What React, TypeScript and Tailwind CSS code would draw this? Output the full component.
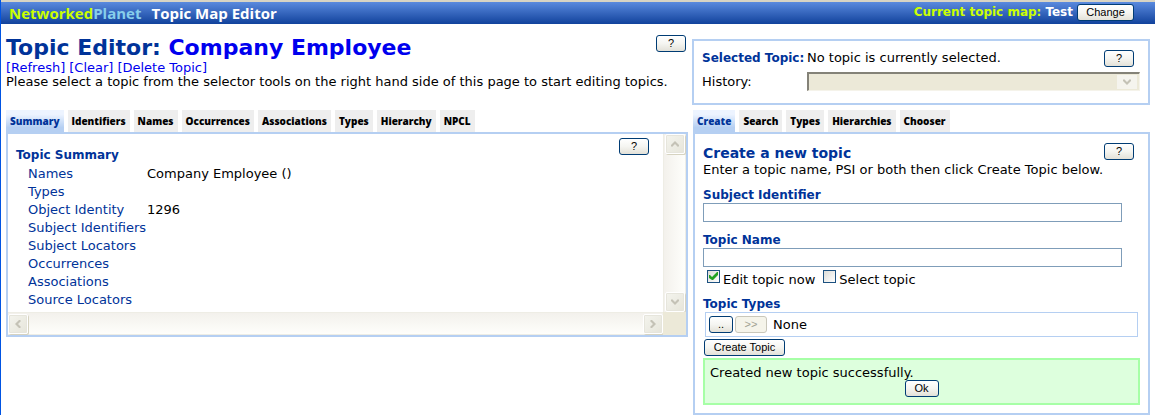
import { useState, type ReactNode } from "react";
import { clsx } from "clsx";

const summaryRows: [string, string][] = [
  ["Names", "Company Employee ()"],
  ["Types", ""],
  ["Object Identity", "1296"],
  ["Subject Identifiers", ""],
  ["Subject Locators", ""],
  ["Occurrences", ""],
  ["Associations", ""],
  ["Source Locators", ""],
];

const editorTabs = ["Summary", "Identifiers", "Names", "Occurrences", "Associations", "Types", "Hierarchy", "NPCL"];
const toolTabs = ["Create", "Search", "Types", "Hierarchies", "Chooser"];

function Button({ children, className, disabled, label }: { children: ReactNode; className?: string; disabled?: boolean; label?: string }) {
  return (
    <button
      type="button"
      disabled={disabled}
      aria-label={label}
      className={clsx(
        "flex h-[17px] shrink-0 items-center justify-center rounded-[3px] border font-['Liberation_Sans',sans-serif] text-[11px] leading-none",
        disabled
          ? "border-[#c9c7ba] bg-[#f5f4ea] text-[#a1a192]"
          : "border-[#003c74] bg-linear-to-b from-white via-[#f5f5f1] to-[#e3e1d8] text-black",
        className,
      )}
    >
      {children}
    </button>
  );
}

function HelpButton() {
  return (
    <Button className="w-[30px]" label="Help">
      ?
    </Button>
  );
}

function Tabs({ names }: { names: string[] }) {
  const [active, setActive] = useState(names[0]);
  return (
    <div role="tablist" className="flex h-[22px] gap-1">
      {names.map((name) => (
        <button
          key={name}
          type="button"
          role="tab"
          aria-selected={name === active}
          onClick={() => setActive(name)}
          className={clsx(
            "px-1 font-['Open_Sans',sans-serif] text-[10px] leading-[22px] font-extrabold",
            name === active ? "bg-linear-to-b from-[#edf4ff] from-20% to-[#b5cff2] to-80% text-[#003399]" : "bg-[#eeeeee] text-black",
          )}
        >
          {name}
        </button>
      ))}
    </div>
  );
}

const arrows = {
  up: "M0 5 4 1 8 5V6L7 7 4 4 1 7 0 6Z",
  down: "M0 3 4 7 8 3V2L7 1 4 4 1 1 0 2Z",
  left: "M5 0 1 4 5 8H6L7 7 4 4 7 1 6 0Z",
  right: "M3 0 7 4 3 8H2L1 7 4 4 1 1 2 0Z",
};

function Arrow({ direction }: { direction: keyof typeof arrows }) {
  return (
    <svg viewBox="0 0 8 8" className="size-2" fill="#c4c2b6" aria-hidden="true">
      <path d={arrows[direction]} />
    </svg>
  );
}

function ScrollButton({ direction }: { direction: keyof typeof arrows }) {
  return (
    <button
      type="button"
      disabled
      aria-label={`Scroll ${direction}`}
      className="flex size-5 shrink-0 items-center justify-center rounded-[2px] border border-white bg-linear-to-br from-[#f4f4ee] to-[#e6e5da] shadow-[1px_1px_0_#d6d3c0,inset_0_0_0_1px_#e6e5dc]"
    >
      <Arrow direction={direction} />
    </button>
  );
}

function FieldLabel({ htmlFor, children }: { htmlFor: string; children: ReactNode }) {
  return (
    <label htmlFor={htmlFor} className="block h-[15px] text-[12px] font-bold text-[#003399]">
      {children}
    </label>
  );
}

function CheckBox({ label, checked }: { label: string; checked: boolean }) {
  return (
    <label className="flex items-start gap-[3px]">
      <span className="grid">
        <input
          type="checkbox"
          defaultChecked={checked}
          className="peer col-start-1 row-start-1 size-[13px] appearance-none border border-[#1c5180] bg-linear-to-br from-[#dcdcd7] to-white"
        />
        <svg
          viewBox="0 0 13 13"
          className="pointer-events-none invisible col-start-1 row-start-1 size-[13px] peer-checked:visible"
          fill="#21a121"
          aria-hidden="true"
        >
          <path d="M2 5H3L5 7 10 2H11V5L6 10H5L2 8Z" />
        </svg>
      </span>
      <span className="pt-[3px]">{label}</span>
    </label>
  );
}

export default function App() {
  return (
    <div className="min-h-screen border-l border-[#0054e3] bg-white font-['DejaVu_Sans',sans-serif] text-[13px] leading-[14px] text-black">
      <header className="flex h-6 items-center justify-between border-t-2 border-[#d8d4c4] bg-linear-to-b from-[#5a8ade] to-[#10429c] pr-[21px] pl-2">
        <div className="flex gap-[10px] font-['Open_Sans',sans-serif] text-[15px] leading-[22px] font-bold text-white">
          <span>
            <span className="text-[#ccff00]">Networked</span>
            <span className="text-[#87ceeb]">Planet</span>
          </span>
          <span>Topic Map Editor</span>
        </div>
        <div className="flex items-start gap-1 pb-[2px] text-[12px] font-bold">
          <span className="pt-px text-[#ccff00]">Current topic map:</span>
          <span className="pt-px text-white">Test</span>
          <Button className="w-[57px] font-normal">Change</Button>
        </div>
      </header>

      <div className="flex gap-1 pr-[5px] pl-[5px]">
        <main className="min-w-0 flex-1">
          <div className="flex h-[86px] items-start justify-between pt-[11px] pr-[2px]">
            <div className="min-w-0 flex-1">
              <div className="flex items-start justify-between">
                <h1 className="text-[22px] leading-[26px] font-bold text-[#003399]">
                  Topic Editor: <span className="text-[#0000ee]">Company Employee</span>
                </h1>
                <HelpButton />
              </div>
              <nav className="flex gap-1 text-[#0000ee]">
                <a href="#refresh">[Refresh]</a>
                <a href="#clear">[Clear]</a>
                <a href="#delete">[Delete Topic]</a>
              </nav>
              <p>Please select a topic from the selector tools on the right hand side of this page to start editing topics.</p>
            </div>
          </div>

          <Tabs names={editorTabs} />
          <section className="border-2 border-[#b5cff2]">
            <div className="flex">
              <div className="flex h-[178px] min-w-0 flex-1 items-start justify-between pt-1 pr-[14px] pl-2">
                <div className="pt-[10px]">
                  <h2 className="pb-[3px] text-[12px] font-bold text-[#003399]">Topic Summary</h2>
                  <dl className="pl-3 leading-[18px]">
                    {summaryRows.map(([name, value]) => (
                      <div key={name} className="flex">
                        <dt className="w-[119px] whitespace-nowrap text-[#003399]">{name}</dt>
                        <dd>{value}</dd>
                      </div>
                    ))}
                  </dl>
                </div>
                <HelpButton />
              </div>
              <div className="flex w-[23px] flex-col items-center justify-between border-x border-[#eeede5] bg-linear-to-r from-[#f3f1ec] to-[#fefefb]">
                <ScrollButton direction="up" />
                <ScrollButton direction="down" />
              </div>
            </div>
            <div className="flex h-[23px]">
              <div className="flex flex-1 items-center justify-between border-y border-[#eeede5] bg-linear-to-b from-[#f3f1ec] to-[#fefefb]">
                <ScrollButton direction="left" />
                <ScrollButton direction="right" />
              </div>
              <div className="w-[23px] bg-[#ece9d8]" />
            </div>
          </section>
        </main>

        <aside className="w-[458px] shrink-0 pt-[15px]">
          <section className="h-[66px] border-2 border-[#b5cff2] pt-[9px] pr-2 pl-2">
            <div className="flex items-start pr-[6px]">
              <h2 className="w-[105px] pt-px text-[12px] font-bold whitespace-nowrap text-[#003399]">Selected Topic:</h2>
              <p className="flex-1 pt-px">No topic is currently selected.</p>
              <HelpButton />
            </div>
            <div className="flex items-center pt-[5px]">
              <label htmlFor="history" className="w-[105px] shrink-0">
                History:
              </label>
              <div className="grid min-w-0 flex-1 items-center">
                <select
                  id="history"
                  disabled
                  className="col-start-1 row-start-1 h-[19px] w-full appearance-none border-t-2 border-r border-b border-l-2 border-[#848278] border-r-[#f5f3ea] border-b-[#f5f3ea] bg-[#ece9d8]"
                />
                <span className="pointer-events-none col-start-1 row-start-1 mr-[3px] flex h-[14px] w-5 items-center justify-center justify-self-end bg-[#f5f4ee]">
                  <Arrow direction="down" />
                </span>
              </div>
            </div>
          </section>

          <div className="pt-[5px] pl-px">
            <Tabs names={toolTabs} />
            <section className="border-2 border-[#b5cff2] pt-[9px] pr-2 pb-2 pl-2">
              <div className="flex items-start justify-between pr-[6px]">
                <div>
                  <h2 className="text-[14px] leading-5 font-bold text-[#003399]">Create a new topic</h2>
                  <p>Enter a topic name, PSI or both then click Create Topic below.</p>
                </div>
                <HelpButton />
              </div>
              <div className="flex flex-col pt-[11px] pr-[18px]">
                <FieldLabel htmlFor="subject">Subject Identifier</FieldLabel>
                <input id="subject" type="text" className="mb-[11px] h-[19px] border border-[#7f9db9] px-1" />
                <FieldLabel htmlFor="name">Topic Name</FieldLabel>
                <input id="name" type="text" className="h-[19px] border border-[#7f9db9] px-1" />
              </div>
              <div className="flex gap-2 pt-[3px] pl-1">
                <CheckBox label="Edit topic now" checked />
                <CheckBox label="Select topic" checked={false} />
              </div>
              <h3 className="pt-[10px] pb-px text-[12px] font-bold text-[#003399]">Topic Types</h3>
              <div className="mr-[2px] ml-[2px] flex h-[25px] items-center gap-[2px] border border-[#b5cff2] pl-[3px]">
                <Button className="w-6" label="Browse topic types">
                  ..
                </Button>
                <Button className="w-8" disabled label="Add topic type">
                  &gt;&gt;
                </Button>
                <span className="pl-1">None</span>
              </div>
              <div className="py-[2px] pl-px">
                <Button className="w-[81px]">Create Topic</Button>
              </div>
              <div role="status" className="flex flex-col items-center border-2 border-[#a6ffa6] bg-[#ddffdd] px-[5px] pt-[6px] pb-[6px]">
                <p className="self-stretch">Created new topic successfully.</p>
                <Button className="w-[34px]">Ok</Button>
              </div>
            </section>
          </div>
        </aside>
      </div>
    </div>
  );
}
